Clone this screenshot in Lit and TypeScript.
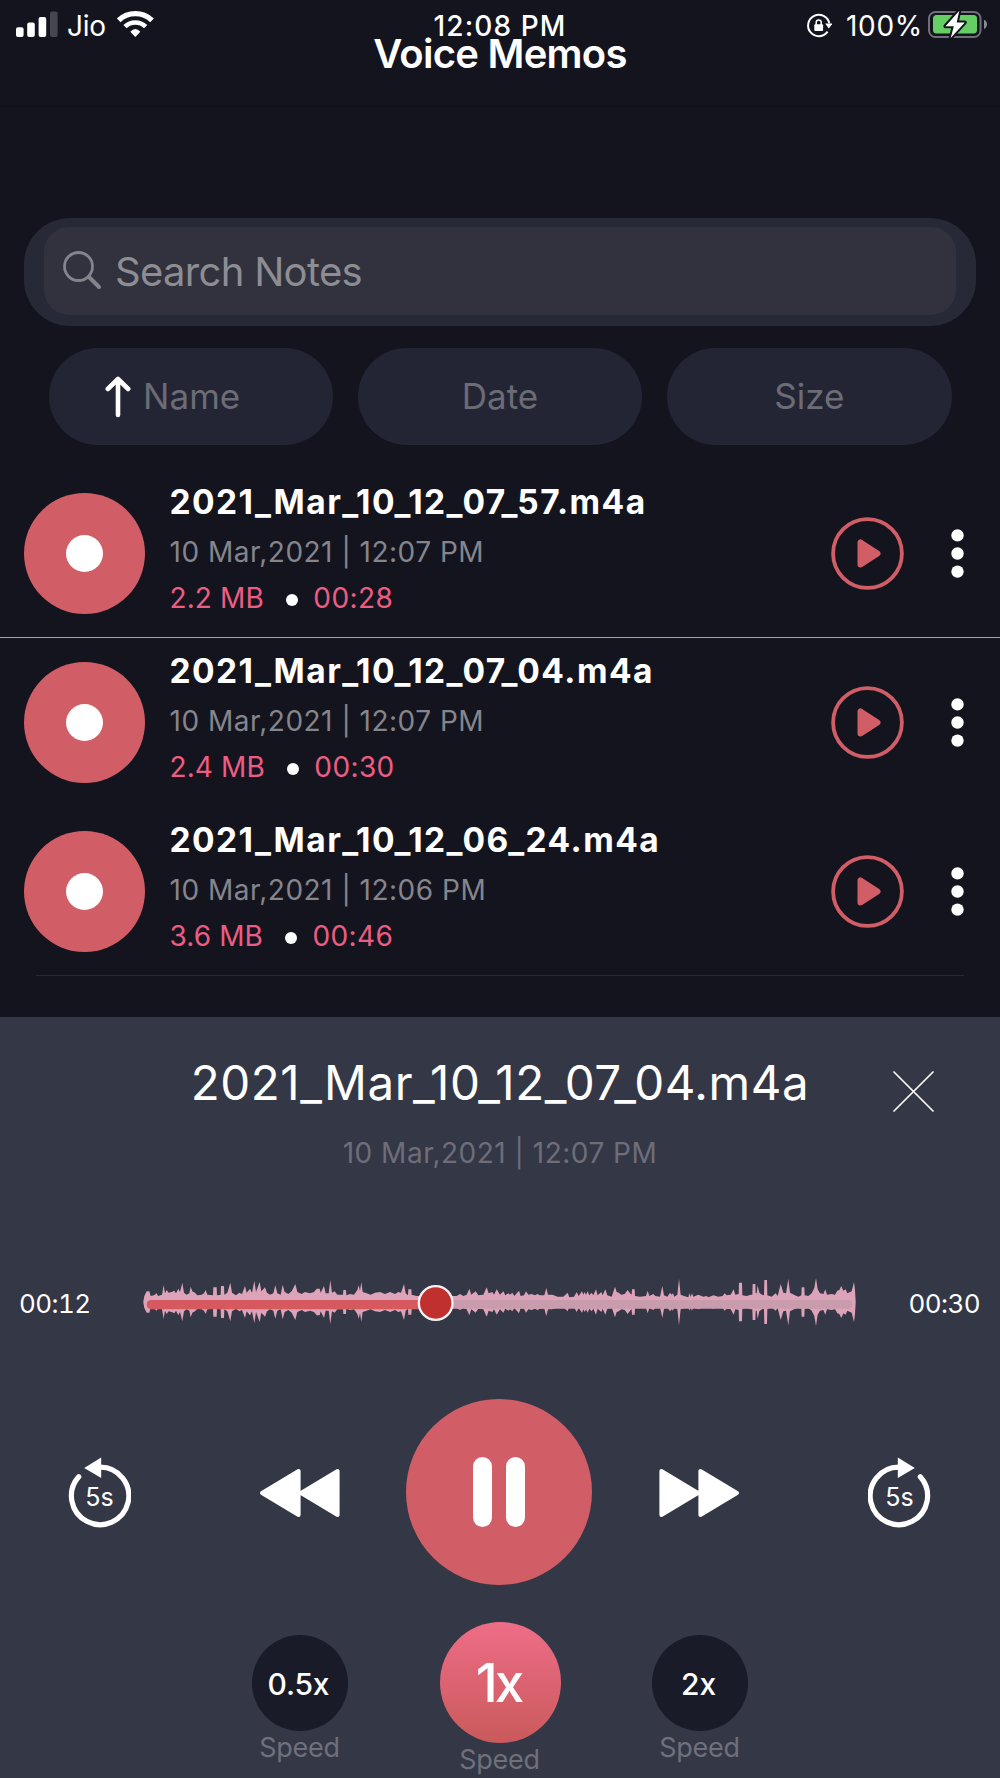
import { LitElement, html, svg, css } from "lit";
import { customElement, property } from "lit/decorators.js";
import { classMap } from "lit/directives/class-map.js";

interface Memo {
  name: string;
  date: string;
  size: string;
  length: string;
}

const MEMOS: Memo[] = [
  { name: "2021_Mar_10_12_07_57.m4a", date: "10 Mar,2021 | 12:07 PM", size: "2.2 MB", length: "00:28" },
  { name: "2021_Mar_10_12_07_04.m4a", date: "10 Mar,2021 | 12:07 PM", size: "2.4 MB", length: "00:30" },
  { name: "2021_Mar_10_12_06_24.m4a", date: "10 Mar,2021 | 12:06 PM", size: "3.6 MB", length: "00:46" },
];

// Waveform outline as "x y" samples of the upper edge; the lower edge mirrors it.
const MIDLINE = 126;
const WAVE_START =
  "40 124 43 108 50 94 58 94 62 108 72 106 80 100 84 108 96 104 101 75 105 100 110 90 116 98 125 96 133 92 138 100 145 86 150 96 157 68 162 98 170 104 178 100 182 80 187 94 195 98 202 106 215 104 222 100 227 90 232 104 249 106 250 82 260 82 261 106 272 104 273 78 282 78 283 104 292 98 301 68 306 98 318 106 328 98 336 102 345 78 350 98 360 86 366 98 373 62 378 96 389 66 394 94 405 82 411 98 420 104 430 100 436 76 442 100 452 104 458 74 464 96 475 102 485 94 496 72 502 96 515 102 525 96 540 100 552 96 560 86 569 86 572 98 582 78 587 100 596 100 601 60 606 98 614 94 622 104 639 104 640 90 648 90 649 106 660 102 672 104 682 90 686 76 690 92 694 66 698 96 710 100 722 104 735 98 750 96 765 102 780 96 795 102 805 96 813 98 822 72 827 100 834 106 835 88 844 88 845 104 860 108 980 108 990 102 1000 108 1010 104 1018 86 1024 104 1037 94 1045 106 1060 104 1070 82 1076 100 1087 96 1092 104 1100 88";
const WAVE_END =
  "0 104 10 94 16 106 25 100 30 104 37 98 43 108 57 92 62 108 72 106 78 94 85 104 95 102 105 106 112 102 120 106 133 106 139 84 144 104 155 104 162 106 172 110 190 110 203 98 208 112 222 110 230 96 236 108 246 94 250 104 254 96 258 104 263 94 268 106 275 98 280 106 288 88 293 106 304 96 308 106 316 88 322 106 335 110 345 80 350 96 356 98 364 104 374 102 383 90 390 100 395 104 396 88 404 88 405 108 420 110 438 108 443 92 448 108 460 102 466 108 480 110 487 78 492 106 502 110 510 98 515 104 519 100 523 110 532 104 537 56 542 104 552 108 565 112 568 100 572 110 576 100 580 110 595 104 610 110 620 108 625 112 640 106 655 110 668 108 674 100 680 106 692 104 701 88 706 104 716 102 717 68 726 68 727 106 740 108 752 104 757 104 758 72 766 72 767 100 770 100 773 76 778 98 786 104 792 106 793 60 801 60 802 106 815 110 827 100 833 108 842 72 850 98 858 100 865 56 870 98 885 106 895 110 904 106 905 82 913 82 914 106 925 108 935 100 943 84 948 54 953 88 960 100 970 102 976 88 981 104 995 102 1005 104 1012 92 1018 90 1024 78 1030 92 1037 88 1042 100 1055 94 1062 66 1065 90 1067 124";

function samples(source: string, shift: number): [number, number][] {
  const n = source.split(" ").map(Number);
  const out: [number, number][] = [];
  for (let i = 0; i < n.length; i += 2) out.push([n[i] + shift, n[i + 1]]);
  return out;
}

function wavePath(): string {
  const top = [...samples(WAVE_START, 0), ...samples(WAVE_END, 1110)];
  const bottom = [...top].reverse().map(([x, y]) => [x, 2 * MIDLINE - y]);
  return "M" + [...top, ...bottom].map(([x, y]) => `${x} ${y}`).join("L") + "Z";
}

const FONT = css`
  :host {
    font-family: Inter, "Liberation Sans", sans-serif;
    font-feature-settings: "calt" 0;
    line-height: 1;
    white-space: nowrap;
  }
  svg {
    display: block;
  }
`;

@customElement("status-bar")
class StatusBar extends LitElement {
  static styles = [
    FONT,
    css`
      :host {
        display: grid;
        grid-template-columns: 1fr auto 1fr;
        align-items: center;
        height: 31px;
        padding: 10px 13px 0 16px;
        font-size: 28px;
        color: #fff;
      }
      .left,
      .right {
        display: flex;
        align-items: center;
      }
      .right {
        justify-content: flex-end;
      }
      .carrier {
        margin: 0 11px 0 9px;
        letter-spacing: -0.2px;
      }
      .clock {
        padding-right: 3px;
        font-weight: 500;
        letter-spacing: 1.1px;
      }
      .percent {
        margin: 0 5px 0 14px;
        letter-spacing: 0.7px;
      }
    `,
  ];

  render() {
    return html`
      <div class="left">
        <svg width="42" height="31" viewBox="16 10 42 31">
          <rect x="16" y="27.3" width="7.6" height="9.7" rx="2" fill="#fff" />
          <rect x="27.2" y="22.6" width="7.6" height="14.4" rx="2" fill="#fff" />
          <rect x="38.6" y="17" width="7.6" height="20" rx="2" fill="#fff" />
          <rect x="50" y="11.5" width="7.6" height="25.5" rx="2" fill="#464651" />
        </svg>
        <span class="carrier">Jio</span>
        <svg width="37" height="31" viewBox="351 30 111 93">
          <g fill="none" stroke="#fff">
            <path d="M356 61A72.5 72.5 0 0 1 456 61" stroke-width="16" />
            <path d="M375 80A45 45 0 0 1 437 80" stroke-width="14" />
          </g>
          <path d="M406 111L391 95Q406 79 421 95Z" fill="#fff" />
        </svg>
      </div>
      <span class="clock">12:08 PM</span>
      <div class="right">
        <svg width="26" height="31" viewBox="807 10 26 31">
          <path d="M828.6 31.6A10.7 10.7 0 1 1 830.3 23.4" fill="none" stroke="#fff" stroke-width="2" />
          <path d="M826.2 23.6H833.4L829.8 28.6Z" fill="#fff" />
          <rect x="815.3" y="24.3" width="8.8" height="6.8" rx="1" fill="#fff" />
          <path d="M817.2 25V22.6A2.5 2.5 0 0 1 822.2 22.6V25" fill="none" stroke="#fff" stroke-width="1.5" />
        </svg>
        <span class="percent">100%</span>
        <svg width="59" height="31" viewBox="928 10 59 31">
          <rect x="929" y="12" width="51.5" height="25" rx="6.5" fill="none" stroke="#6f6f78" stroke-width="2" />
          <rect x="933" y="15" width="44" height="18.6" rx="3.5" fill="#65ce64" />
          <path d="M984 19.7Q987 21 987 24.3T984 29Z" fill="#8a8a92" />
          <path
            d="M959.3 10.7L945.5 26.2H953.8L950.7 38L964.8 22.4H956.7Z"
            fill="#fff"
            stroke="#14141f"
            stroke-width="4"
            stroke-linejoin="round"
            paint-order="stroke"
          />
        </svg>
      </div>
    `;
  }
}

@customElement("memo-row")
class MemoRow extends LitElement {
  @property({ attribute: false }) memo!: Memo;

  static styles = [
    FONT,
    css`
      :host {
        display: flex;
        align-items: center;
        box-sizing: border-box;
        height: 169px;
        padding: 0 36px 0 24px;
      }
      .disc {
        display: grid;
        place-items: center;
        width: 121px;
        height: 121px;
        border-radius: 50%;
        background: #d15e67;
      }
      .hub {
        width: 37px;
        height: 37px;
        border-radius: 50%;
        background: #fff;
      }
      .text {
        flex: 1;
        padding-left: 24.5px;
        margin-top: -10px;
      }
      .name {
        font-size: 33.5px;
        font-weight: 700;
        letter-spacing: 1.44px;
        line-height: 50px;
        color: #fff;
      }
      .date {
        font-size: 28px;
        letter-spacing: 0.5px;
        line-height: 50px;
        color: #85858c;
      }
      .meta {
        display: flex;
        align-items: center;
        font-size: 28px;
        letter-spacing: 0.1px;
        line-height: 43px;
        color: #ed5d83;
        height: 43px;
      }
      .dot {
        width: 12px;
        height: 12px;
        margin: 2px 15px 0 22.5px;
        border-radius: 50%;
        background: #fff;
      }
      .length {
        letter-spacing: 0.4px;
      }
      .play {
        margin-right: 47.5px;
      }
    `,
  ];

  render() {
    const m = this.memo;
    return html`
      <div class="disc"><div class="hub"></div></div>
      <div class="text">
        <div class="name">${m.name}</div>
        <div class="date">${m.date}</div>
        <div class="meta"><span>${m.size}</span><i class="dot"></i><span class="length">${m.length}</span></div>
      </div>
      <svg class="play" width="73" height="73" viewBox="0 0 73 73">
        <circle cx="36.5" cy="36.5" r="34.4" fill="none" stroke="#d15e67" stroke-width="3.8" />
        <path d="M29.5 25.5V47.5L46.5 36.5Z" fill="#d15e67" stroke="#d15e67" stroke-width="6" stroke-linejoin="round" />
      </svg>
      <svg width="13" height="49" viewBox="0 0 13 49" fill="#fff">
        <circle cx="6.5" cy="6.4" r="6.2" />
        <circle cx="6.5" cy="24.5" r="6.2" />
        <circle cx="6.5" cy="42.6" r="6.2" />
      </svg>
    `;
  }
}

@customElement("memo-player")
class MemoPlayer extends LitElement {
  static styles = [
    FONT,
    css`
      :host {
        display: block;
        box-sizing: border-box;
        height: 761px;
        padding-top: 36px;
        background: #343746;
        color: #fff;
        overflow: hidden;
      }
      .head {
        display: grid;
        grid-template-columns: 1fr auto 1fr;
        height: 60px;
      }
      .name {
        grid-column: 2;
        font-size: 47.5px;
        letter-spacing: 0.53px;
        line-height: 60px;
      }
      .close {
        justify-self: end;
        margin: 18px 66px 0 0;
      }
      .date {
        font-size: 28px;
        letter-spacing: 0.5px;
        line-height: 81px;
        text-align: center;
        color: #6d6e79;
      }
      .scrub {
        display: flex;
        justify-content: space-between;
        align-items: center;
        height: 80px;
        margin-top: 66px;
        padding: 0 20px 0 19px;
      }
      .time {
        padding-top: 7px;
        font-size: 26px;
        letter-spacing: -0.6px;
        font-feature-settings: "calt" 0, "tnum" 1;
      }
      .controls {
        display: grid;
        grid-template-columns: repeat(5, 200px);
        place-items: center;
        height: 186px;
        margin-top: 59px;
      }
      .pause {
        display: flex;
        justify-content: center;
        align-items: center;
        gap: 13.5px;
        width: 186px;
        height: 186px;
        margin-left: -2px;
        border-radius: 50%;
        background: #d15e67;
      }
      .bar {
        width: 19.5px;
        height: 70px;
        border-radius: 10px;
        background: #fff;
      }
      .skip {
        margin-top: 2px;
        font-size: 25px;
      }
      .back {
        margin-right: 3px;
      }
      .seek {
        margin-top: 1px;
      }
      .ahead {
        margin-right: 3px;
      }
      .speeds {
        display: grid;
        grid-template-columns: repeat(3, 200px);
        justify-content: center;
        margin-top: 37px;
      }
      .speed {
        display: flex;
        flex-direction: column;
        align-items: center;
        padding-top: 12.5px;
      }
      .knob {
        display: grid;
        place-items: center;
        width: 96.5px;
        height: 96.5px;
        padding: 2px 3px 0 0;
        box-sizing: border-box;
        border-radius: 50%;
        background: #1a1b29;
        font-size: 30px;
        font-weight: 500;
        letter-spacing: -0.2px;
      }
      .label {
        padding-right: 1px;
        font-size: 27px;
        letter-spacing: -0.3px;
        line-height: 33px;
        color: #6f707b;
      }
      .active {
        padding-top: 0;
      }
      .active .knob {
        width: 121px;
        height: 121px;
        background: linear-gradient(#ee6d87, #c95a5b);
        font-size: 53px;
        letter-spacing: -3px;
      }
    `,
  ];

  private skip(forward: boolean) {
    const arc = forward
      ? svg`<path d="M31 13.2A28.7 28.7 0 1 0 52.3 22.8" />`
      : svg`<path d="M33 13.2A28.7 28.7 0 1 1 11.7 22.8" />`;
    const head = forward ? svg`<path d="M29.8 3.5V24L46.8 14Z" fill="#fff" />` : svg`<path d="M34.2 3.5V24L17.2 14Z" fill="#fff" />`;
    return html`<svg class=${classMap({ skip: true, back: !forward })} width="64" height="78" viewBox="0 0 64 78">
      <g fill="none" stroke="#fff" stroke-width="5.2" stroke-linecap="round">${arc}</g>
      ${head}
      <text x=${forward ? 31.5 : 32.5} y="52" text-anchor="middle" fill="#fff">5s</text>
    </svg>`;
  }

  private seek(d: string, ahead: boolean) {
    return html`<svg class=${classMap({ seek: true, ahead })} width="82" height="52" viewBox="0 0 82 52">
      <path d=${d} fill="#fff" stroke="#fff" stroke-width="4" stroke-linejoin="round" />
    </svg>`;
  }

  private speed(value: string, active = false) {
    return html`<div class=${classMap({ speed: true, active })}>
      <div class="knob">${value}</div>
      <div class="label">Speed</div>
    </div>`;
  }

  render() {
    return html`
      <div class="head">
        <div class="name">${MEMOS[1].name}</div>
        <svg class="close" width="41" height="41" viewBox="0 0 41 41">
          <path d="M1 1L40 40M40 1L1 40" stroke="#fff" stroke-width="1.7" stroke-linecap="round" />
        </svg>
      </div>
      <div class="date">${MEMOS[1].date}</div>
      <div class="scrub">
        <span class="time">00:12</span>
        <svg width="714" height="80" viewBox="39 0 2142 240">
          <path d=${wavePath()} fill="#dda3b8" />
          <path d="M917 120H2154A13 13 0 0 1 2154 146H917Z" fill="#c99cad" />
          <path d="M917 120H64A14 14 0 0 0 64 148H917Z" fill="#d6595f" />
          <circle cx="917" cy="129" r="50.5" fill="#c0302f" stroke="#f6f2f3" stroke-width="7" />
        </svg>
        <span class="time">00:30</span>
      </div>
      <div class="controls">
        ${this.skip(false)} ${this.seek("M39.6 4V48L3 26ZM78.6 4V48L42 26Z", false)}
        <div class="pause"><i class="bar"></i><i class="bar"></i></div>
        ${this.seek("M3.4 4V48L40 26ZM42.4 4V48L79 26Z", true)} ${this.skip(true)}
      </div>
      <div class="speeds">${this.speed("0.5x")} ${this.speed("1x", true)} ${this.speed("2x")}</div>
    `;
  }
}

@customElement("app-root")
class AppRoot extends LitElement {
  static styles = [
    FONT,
    css`
      :host {
        display: flex;
        flex-direction: column;
        width: 1000px;
        height: 1778px;
        overflow: hidden;
        background: #14141f;
      }
      .header {
        box-sizing: border-box;
        height: 107px;
        border-bottom: 1px solid #0f0f18;
      }
      .title {
        margin: 0;
        font-size: 40px;
        font-weight: 600;
        letter-spacing: -0.74px;
        line-height: 25px;
        text-align: center;
        color: #fff;
      }
      .search {
        box-sizing: border-box;
        height: 107.5px;
        margin: 111px 24px 0;
        padding: 9px 20px 11px;
        border-radius: 46px;
        background: #282937;
      }
      .field {
        display: flex;
        align-items: center;
        gap: 13px;
        height: 87.5px;
        box-sizing: border-box;
        padding: 2px 0 0 18px;
        border-radius: 25px;
        background: #31323e;
        font-size: 40px;
        letter-spacing: -0.69px;
        color: #8d8d92;
      }
      .field svg {
        margin-top: -4px;
      }
      .filters {
        display: grid;
        grid-template-columns: repeat(3, 1fr);
        gap: 25px;
        margin: 22.5px 48.5px 0;
      }
      .filter {
        display: flex;
        justify-content: center;
        align-items: center;
        gap: 12px;
        height: 97px;
        box-sizing: border-box;
        border-radius: 49px;
        background: #242534;
        font-size: 35px;
        color: #6b6c75;
      }
      .sorted {
        padding-right: 36px;
      }
      .list {
        margin-top: 24px;
      }
      .rule {
        height: 1px;
        margin-top: -1px;
        background: #a3a3aa;
      }
      .faint {
        margin: -1px 36px 0;
        background: #2a2a35;
      }
      memo-player {
        margin-top: 41px;
        flex: none;
      }
    `,
  ];

  render() {
    return html`
      <div class="header">
        <status-bar></status-bar>
        <h1 class="title">Voice Memos</h1>
      </div>
      <div class="search">
        <div class="field">
          <svg width="40" height="40" viewBox="0 0 40 40" fill="none" stroke="#84848c" stroke-linecap="round">
            <circle cx="16.5" cy="16.5" r="14" stroke-width="2.8" />
            <path d="M27 27L37 37" stroke-width="4" />
          </svg>
          <span>Search Notes</span>
        </div>
      </div>
      <div class="filters">
        <div class="filter sorted">
          <svg width="26" height="42" viewBox="0 0 26 42" fill="none" stroke="#fff" stroke-width="4.6" stroke-linecap="round" stroke-linejoin="round">
            <path d="M13 39V3.5M2.8 13L13 3L23.2 13" />
          </svg>
          <span>Name</span>
        </div>
        <div class="filter">Date</div>
        <div class="filter">Size</div>
      </div>
      <div class="list">
        <memo-row .memo=${MEMOS[0]}></memo-row>
        <div class="rule"></div>
        <memo-row .memo=${MEMOS[1]}></memo-row>
        <memo-row .memo=${MEMOS[2]}></memo-row>
        <div class="rule faint"></div>
      </div>
      <memo-player></memo-player>
    `;
  }
}
